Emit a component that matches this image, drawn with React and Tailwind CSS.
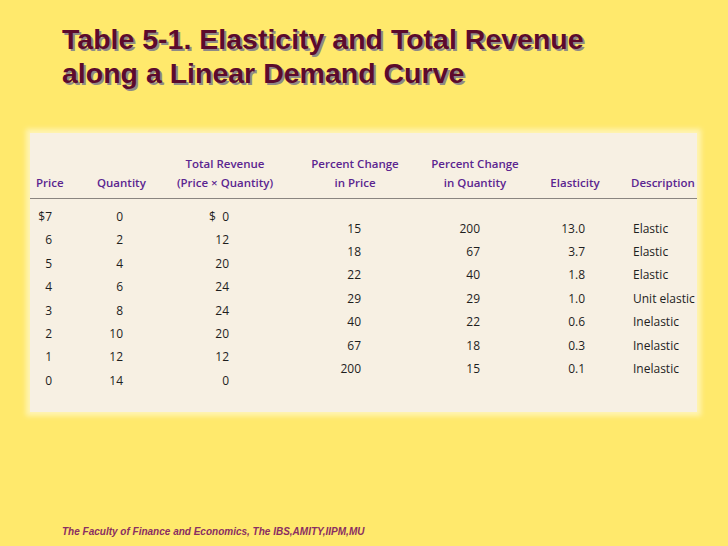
import React from 'react'

const LEFT = [
  { head: ['', 'Price'], w: 'w-[60px]', hcls: 'pl-[6px] text-left', dcls: 'pr-[38px] text-right',
    data: ['$7', '6', '5', '4', '3', '2', '1', '0'] },
  { head: ['', 'Quantity'], w: 'w-[70px]', hcls: 'pl-[7px] text-left', dcls: 'pr-[37px] text-right',
    data: ['0', '2', '4', '6', '8', '10', '12', '14'] },
  { head: ['Total Revenue', '(Price × Quantity)'], w: 'w-[130px]', hcls: 'text-center', dcls: 'pr-[61px] text-right',
    data: ['$\u00a0\u00a00', '12', '20', '24', '24', '20', '12', '0'] },
]

const RIGHT = [
  { head: ['Percent Change', 'in Price'], w: 'w-[130px]', hcls: 'text-center', dcls: 'pr-[59px] text-right',
    data: ['15', '18', '22', '29', '40', '67', '200'] },
  { head: ['Percent Change', 'in Quantity'], w: 'w-[110px]', hcls: 'text-center', dcls: 'pr-[50px] text-right',
    data: ['200', '67', '40', '29', '22', '18', '15'] },
  { head: ['', 'Elasticity'], w: 'w-[90px]', hcls: 'text-center', dcls: 'pr-[35px] text-right',
    data: ['13.0', '3.7', '1.8', '1.0', '0.6', '0.3', '0.1'] },
  { head: ['', 'Description'], w: 'w-[77px]', hcls: 'pl-[11px] text-left', dcls: 'pl-[13px] text-left whitespace-nowrap',
    data: ['Elastic', 'Elastic', 'Elastic', 'Unit elastic', 'Inelastic', 'Inelastic', 'Inelastic'] },
]

const COLS = [...LEFT, ...RIGHT]

function Column({ col, offset }) {
  return (
    <div className={`${col.w} flex flex-col ${offset ? 'pt-[11.7px]' : ''}`}>
      {col.data.map((d, i) => (
        <div key={i} className={`h-[23.4px] leading-[23.4px] ${col.dcls}`}>{d}</div>
      ))}
    </div>
  )
}

export default function App() {
  return (
    <div className="w-[728px] h-[546px] bg-[#ffe96c] flex flex-col overflow-hidden">
      <h1
        className="pl-[62px] pt-[22px] text-[28.5px] leading-[34px] font-bold text-[#5c0b2c] [text-shadow:2px_2px_0_#8f8a86]"
        style={{ fontFamily: '"Liberation Sans", Arial, sans-serif' }}
      >
        Table 5-1. Elasticity and Total Revenue
        <br />
        along a Linear Demand Curve
      </h1>

      <div
        className="ml-[30px] mt-[43px] w-[667px] h-[279px] bg-[#f7f0e3] shadow-[0_0_5px_4px_#fff4b4] flex flex-col"
        style={{ fontFamily: '"Open Sans", sans-serif' }}
      >
        {/* header */}
        <div className="flex pt-[21px] pb-[6px] text-[11.5px] leading-[19px] font-semibold text-[#5b2590]">
          {COLS.map((c, i) => (
            <div key={i} className={`${c.w} flex flex-col whitespace-nowrap ${c.hcls}`}>
              <span>{c.head[0] || '\u00a0'}</span>
              <span>{c.head[1]}</span>
            </div>
          ))}
        </div>
        <div className="h-px bg-[#8a8580]" />

        {/* body */}
        <div className="flex pt-[6px] text-[12px] text-[#1e1e1e]">
          {LEFT.map((c, i) => <Column key={i} col={c} />)}
          {RIGHT.map((c, i) => <Column key={i} col={c} offset />)}
        </div>
      </div>

      <div className="mt-auto pl-[62px] pb-[8px]">
        <p
          className="text-[10px] leading-[12px] font-bold italic text-[#8a2e62]"
          style={{ fontFamily: '"Liberation Sans", Arial, sans-serif' }}
        >
          The Faculty of Finance and Economics, The IBS,AMITY,IIPM,MU
        </p>
      </div>
    </div>
  )
}
